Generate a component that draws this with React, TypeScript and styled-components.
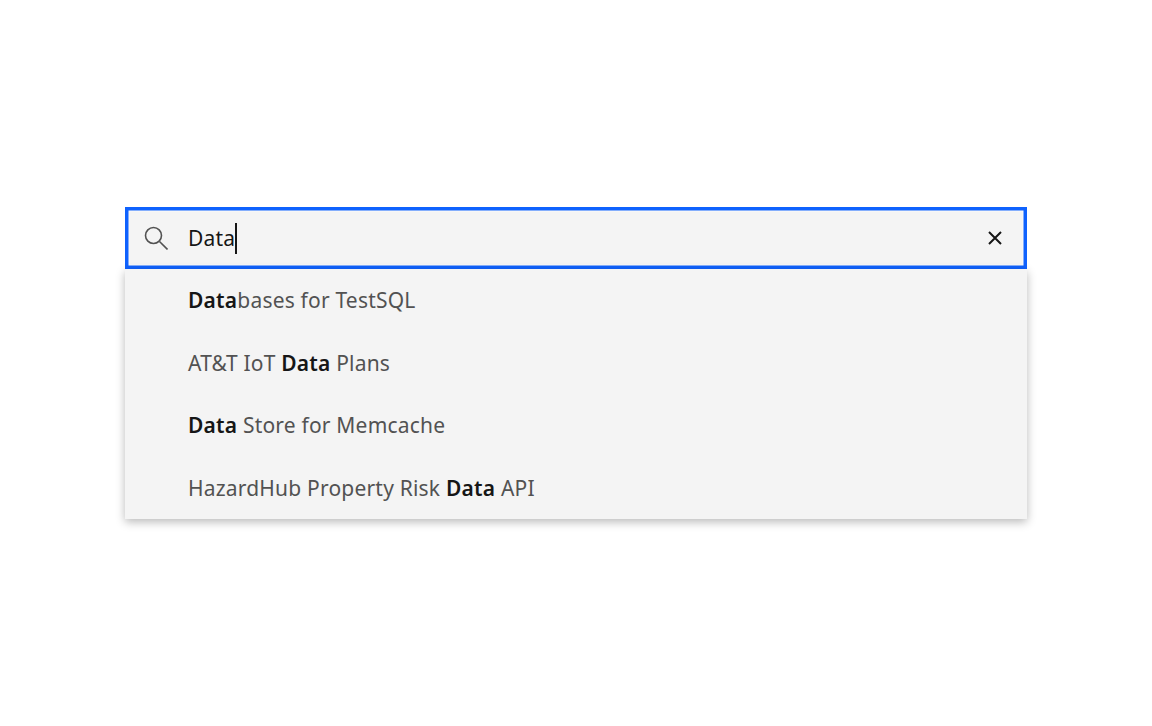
import styled, { createGlobalStyle } from "styled-components";

const GlobalStyle = createGlobalStyle`
  html, body {
    margin: 0;
    padding: 0;
    background: #fff;
  }
`;

const Page = styled.div`
  width: 1152px;
  height: 726px;
  box-sizing: border-box;
  padding: 207px 125px 0;
  font-family: "Noto Sans", "Open Sans", sans-serif;
`;

const SearchWrapper = styled.div`
  width: 902px;
`;

const SearchBar = styled.div`
  height: 62px;
  box-sizing: border-box;
  display: flex;
  align-items: center;
  padding: 0 23px 0 19px;
  background: #f4f4f4;
  box-shadow: inset 0 0 0 3.5px #0f62fe, inset 0 0 0 4.5px rgba(255, 255, 255, 0.6);
`;

const SearchIcon = styled.svg`
  width: 24px;
  height: 24px;
  flex-shrink: 0;
  color: #525252;
`;

const InputText = styled.div`
  flex: 1;
  margin-left: 20px;
  display: flex;
  align-items: center;
  font-size: 21px;
  letter-spacing: 0.2px;
  color: #161616;
`;

const Caret = styled.span`
  display: inline-block;
  width: 2px;
  height: 31px;
  background: #161616;
`;

const ClearIcon = styled.svg`
  width: 18px;
  height: 18px;
  flex-shrink: 0;
  color: #161616;
`;

const Suggestions = styled.ul`
  list-style: none;
  margin: 0;
  padding: 0;
  background: #f4f4f4;
  box-shadow: 0 3px 9px rgba(0, 0, 0, 0.28);
`;

const Suggestion = styled.li`
  height: 62.5px;
  display: flex;
  align-items: center;
  padding-left: 63px;
  font-size: 21px;
  letter-spacing: 0.2px;
  color: #525252;
  white-space: pre;
`;

const Match = styled.strong`
  font-weight: 600;
  color: #161616;
`;

const items: [string, string, string][] = [
  ["", "Data", "bases for TestSQL"],
  ["AT&T IoT ", "Data", " Plans"],
  ["", "Data", " Store for Memcache"],
  ["HazardHub Property Risk ", "Data", " API"],
];

const App = () => (
  <>
    <GlobalStyle />
    <Page>
      <SearchWrapper>
        <SearchBar>
          <SearchIcon viewBox="0 0 24 24" fill="none" stroke="currentColor" strokeWidth="1.6">
            <circle cx="9.5" cy="9.5" r="8" />
            <path d="M15.5 15.5l8 8" />
          </SearchIcon>
          <InputText>
            Data
            <Caret />
          </InputText>
          <ClearIcon viewBox="0 0 18 18" fill="none" stroke="currentColor" strokeWidth="2">
            <path d="M3 3l12 12M15 3L3 15" />
          </ClearIcon>
        </SearchBar>
        <Suggestions>
          {items.map(([before, match, after]) => (
            <Suggestion key={before + after}>
              {before}
              <Match>{match}</Match>
              {after}
            </Suggestion>
          ))}
        </Suggestions>
      </SearchWrapper>
    </Page>
  </>
);

export default App;
